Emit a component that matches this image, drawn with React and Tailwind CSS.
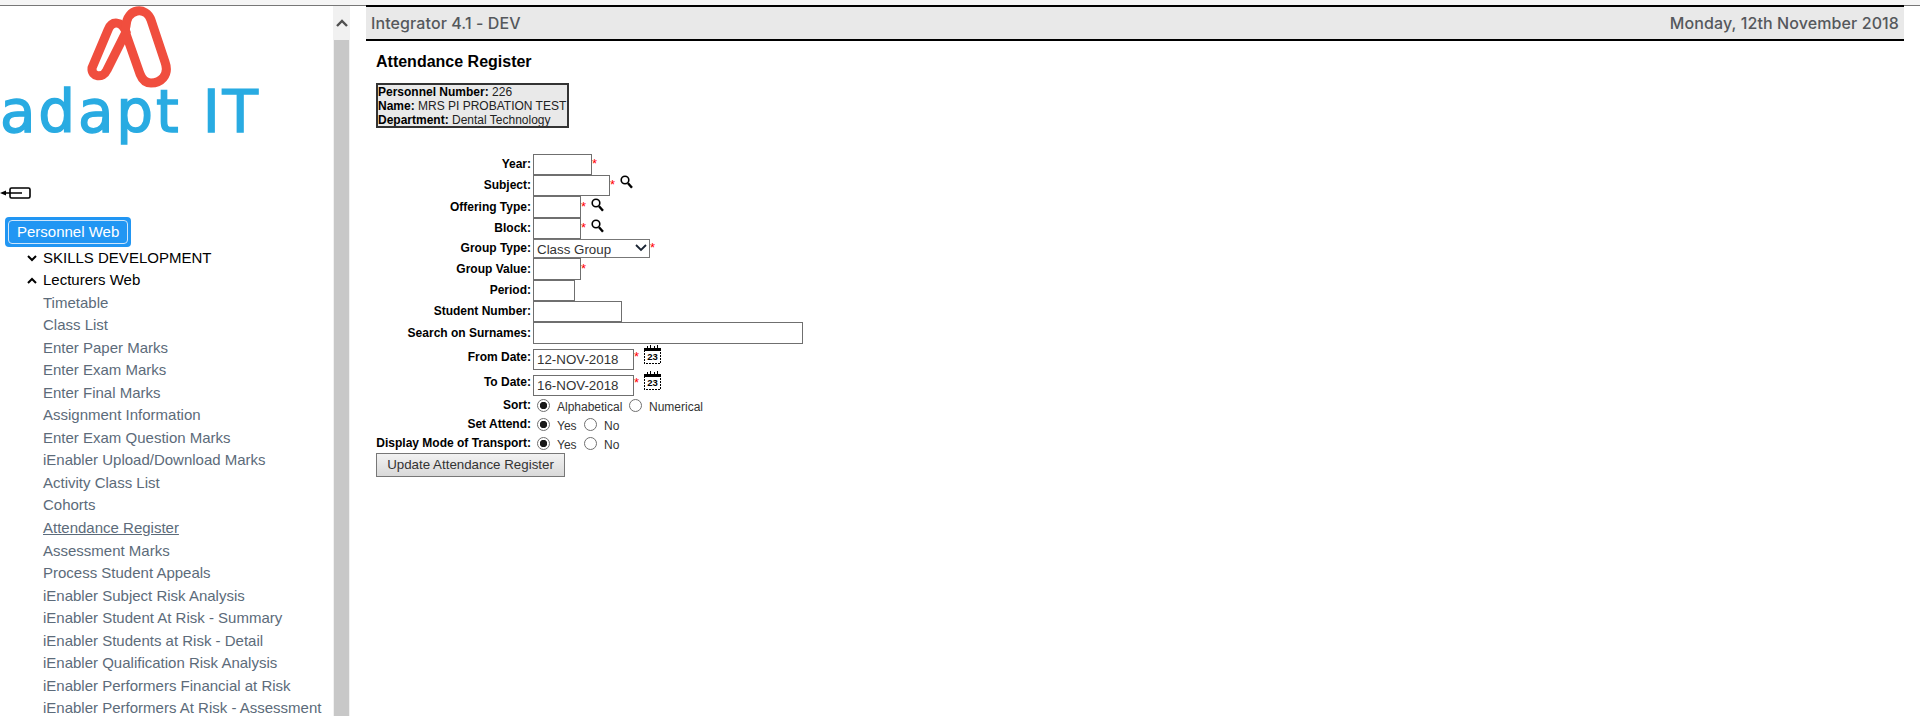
const menu = ["Timetable","Class List","Enter Paper Marks","Enter Exam Marks","Enter Final Marks","Assignment Information","Enter Exam Question Marks","iEnabler Upload/Download Marks","Activity Class List","Cohorts","Attendance Register","Assessment Marks","Process Student Appeals","iEnabler Subject Risk Analysis","iEnabler Student At Risk - Summary","iEnabler Students at Risk - Detail","iEnabler Qualification Risk Analysis","iEnabler Performers Financial at Risk","iEnabler Performers At Risk - Assessment"];

function Chevron({ up }) {
  return (
    <svg width="10" height="7" viewBox="0 0 10 7" className="shrink-0">
      <path d={up ? "M1 6 L5 2 L9 6" : "M1 1 L5 5 L9 1"} fill="none" stroke="#000" strokeWidth="2" />
    </svg>
  );
}

function Logo() {
  return (
    <div className="h-[180px]">
      <svg width="266" height="84" viewBox="0 6 266 84" className="block">
        <g fill="none" stroke="#f04e3e" strokeWidth="9">
          <path d="M126 32 L107 70 C103 79 91 77 92 68 L108 30 C112 20 122 21 126 32 Z" />
          <path d="M126 26 C127 8 146 6 151 20 L165 62 C170 76 160 83 151 83 C145 83 142 79 140 74 L126 34 C125 31 125 29 126 26 Z" />
        </g>
      </svg>
      <div className="h-[62px] text-[58px] leading-[62px] text-[#29abe2] font-['DejaVu_Sans',sans-serif] font-normal tracking-[2.8px] [-webkit-text-stroke:1.4px_#29abe2] whitespace-nowrap -mt-[9px]">adapt IT</div>
    </div>
  );
}

function Sidebar() {
  return (
    <div className="w-[333px] shrink-0 overflow-hidden font-['Liberation_Sans',Arial,sans-serif] text-[15px]">
      <Logo />
      <svg width="32" height="14" viewBox="0 0 32 14" className="block">
        <path d="M0 7 L6 4.5 V9.5 Z" fill="#000" />
        <path d="M5 7 H22" stroke="#000" strokeWidth="1.5" />
        <rect x="10" y="2" width="20" height="10" rx="1.5" fill="none" stroke="#000" strokeWidth="1.6" />
      </svg>
      <div className="ml-[5px] mt-[17px] w-[126px] h-[30px] rounded-[4px] bg-[#2196f3] p-[3px]">
        <div className="h-full border border-[#cfe6fb] rounded-[4px] pl-[8px] leading-[22px] text-white">Personnel Web</div>
      </div>
      <div className="ml-[27px] flex items-center gap-[6px] h-[22.5px] text-black"><Chevron /><span>SKILLS DEVELOPMENT</span></div>
      <div className="ml-[27px] flex items-center gap-[6px] h-[22px] text-black"><Chevron up /><span>Lecturers Web</span></div>
      <ul className="ml-[43px]">
        {menu.map((m) => (
          <li key={m} className={"h-[22.55px] leading-[22.5px] whitespace-nowrap text-[#5c6b7a]" + (m === "Attendance Register" ? " underline" : "")}>{m}</li>
        ))}
      </ul>
    </div>
  );
}

function Scrollbar() {
  return (
    <div className="w-[17px] shrink-0 bg-[#f1f1f1] flex flex-col">
      <div className="h-[34px] flex items-center justify-center">
        <svg width="12" height="8" viewBox="0 0 12 8"><path d="M1 7 L6 2 L11 7" fill="none" stroke="#505050" strokeWidth="2.4" /></svg>
      </div>
      <div className="flex-1 bg-[#c8c8c8] mx-[1px]" />
    </div>
  );
}

const Star = () => <span className="text-[#ff0000] text-[13px] leading-none -mt-[2px]">*</span>;

function Lens() {
  return (
    <svg width="13" height="14" viewBox="0 0 13 14" className="block">
      <circle cx="5" cy="5" r="3.8" fill="none" stroke="#000" strokeWidth="1.6" />
      <path d="M8 8.2 L12 12.8" stroke="#000" strokeWidth="2.4" />
    </svg>
  );
}

function Calendar() {
  return (
    <svg width="19" height="19" viewBox="0 0 19 19" className="block">
      <rect x="1.5" y="4.5" width="16" height="13.5" fill="#fff" stroke="#000" strokeDasharray="2 1" shapeRendering="crispEdges" />
      <rect x="1" y="3" width="17" height="3" fill="#000" shapeRendering="crispEdges" />
      <path d="M4 1h1v4H4zM7 0h1v5H7zM11 1h1v4h-1zM14 0h1v5h-1z" fill="#000" shapeRendering="crispEdges" />
      <text x="9.5" y="15" textAnchor="middle" fontSize="9.5" fontWeight="700" fontFamily="Liberation Sans" fill="#000">23</text>
    </svg>
  );
}

const inputCls = "block h-full border border-[#6f6f6f] bg-white px-[3px] text-[13.33px] text-[#333] outline-none";

function Row({ label, className, labelClass = "items-center pb-[1px]", children }) {
  return (
    <div className={"flex " + className}>
      <label className={"w-[155px] shrink-0 flex justify-end font-bold text-black whitespace-nowrap " + labelClass}>{label}:</label>
      <div className="ml-[2px] flex items-center">{children}</div>
    </div>
  );
}

function Radio({ checked, name }) {
  return (
    <input
      type="radio"
      name={name}
      defaultChecked={checked}
      className="appearance-none w-[13px] h-[13px] rounded-full border border-[#707070] bg-white checked:bg-[radial-gradient(circle,#1a1a1a_3.4px,#ffffff_4px)] shrink-0"
    />
  );
}

function Form() {
  return (
    <div className="text-[12px]">
      <Row label="Year" className="h-[21px]"><input className={inputCls + " w-[59px]"} /><Star /></Row>
      <Row label="Subject" className="h-[21px]"><input className={inputCls + " w-[77px]"} /><Star /><span className="ml-[5px] -mt-[8px]"><Lens /></span></Row>
      <Row label="Offering Type" className="h-[22px]"><input className={inputCls + " w-[48px]"} /><Star /><span className="ml-[5px] -mt-[5px]"><Lens /></span></Row>
      <Row label="Block" className="h-[21px]"><input className={inputCls + " w-[48px]"} /><Star /><span className="ml-[5px] -mt-[5px]"><Lens /></span></Row>
      <Row label="Group Type" className="h-[19px]">
        <div className="relative h-full w-[117px]">
          <select className="appearance-none block w-full h-full border border-[#777] bg-white pl-[3px] text-[13.33px] text-[#333] outline-none">
            <option>Class Group</option>
          </select>
          <svg width="12" height="8" viewBox="0 0 12 8" className="absolute right-[3px] top-[5px]"><path d="M1 1 L6 6 L11 1" fill="none" stroke="#1a2433" strokeWidth="1.8" /></svg>
        </div>
        <Star />
      </Row>
      <Row label="Group Value" className="h-[22px]"><input className={inputCls + " w-[48px]"} /><Star /></Row>
      <Row label="Period" className="h-[21px]"><input className={inputCls + " w-[42px]"} /></Row>
      <Row label="Student Number" className="h-[21px]"><input className={inputCls + " w-[89px]"} /></Row>
      <Row label="Search on Surnames" className="h-[22px]"><input className={inputCls + " w-[270px]"} /></Row>
      <Row label="From Date" className="h-[26px]" labelClass="items-start pt-[4px]">
        <div className="flex h-[26px] items-center">
          <input defaultValue="12-NOV-2018" className={inputCls + " w-[101px] !h-[21px] mt-[4px]"} /><Star /><span className="ml-[4px] -mt-[5px]"><Calendar /></span>
        </div>
      </Row>
      <Row label="To Date" className="h-[26px]" labelClass="items-start pt-[3px]">
        <div className="flex h-[26px] items-center">
          <input defaultValue="16-NOV-2018" className={inputCls + " w-[101px] !h-[21px] mt-[4px]"} /><Star /><span className="ml-[4px] -mt-[5px]"><Calendar /></span>
        </div>
      </Row>
      <Row label="Sort" className="h-[19px]">
        <span className="ml-[4px] flex items-center"><Radio checked name="s" /><span className="ml-[7px] mt-[2px] text-[12px] text-[#333] w-[72px]">Alphabetical</span><Radio name="s" /><span className="ml-[7px] mt-[2px] text-[12px] text-[#333]">Numerical</span></span>
      </Row>
      <Row label="Set Attend" className="h-[19px]">
        <span className="ml-[4px] flex items-center"><Radio checked name="a" /><span className="ml-[7px] mt-[2px] text-[12px] text-[#333] w-[27px]">Yes</span><Radio name="a" /><span className="ml-[7px] mt-[2px] text-[12px] text-[#333]">No</span></span>
      </Row>
      <Row label="Display Mode of Transport" className="h-[19px]">
        <span className="ml-[4px] flex items-center"><Radio checked name="t" /><span className="ml-[7px] mt-[2px] text-[12px] text-[#333] w-[27px]">Yes</span><Radio name="t" /><span className="ml-[7px] mt-[2px] text-[12px] text-[#333]">No</span></span>
      </Row>
      <button className="block w-[189px] h-[24px] border border-[#777] bg-gradient-to-b from-[#f2f2f2] to-[#d9d9d9] text-[13.33px] text-[#333]">Update Attendance Register</button>
    </div>
  );
}

function Main() {
  return (
    <div className="ml-[16px] w-[1538px] shrink-0 font-['Liberation_Sans',Arial,sans-serif]">
      <div className="-mt-[1px] h-[36px] border-t-2 border-b-2 border-black bg-[#e9e9e9] flex items-center justify-between pl-[5px] pr-[5px] font-['Inter',sans-serif] text-[16px] tracking-[0.1px] text-[#55585c] font-medium">
        <span>Integrator 4.1 - DEV</span>
        <span>Monday, 12th November 2018</span>
      </div>
      <div className="pl-[10px]">
        <h1 className="mt-[11px] h-[20px] leading-[20px] text-[16px] font-bold text-black">Attendance Register</h1>
        <div className="mt-[11px] w-[193px] h-[45px] border-[2px] border-[#333] bg-[#e9e9e9] text-[12px] leading-[14px] text-[#222] whitespace-nowrap overflow-hidden">
          <div><b className="text-black">Personnel Number:</b> 226</div>
          <div><b className="text-black">Name:</b> MRS PI PROBATION TEST</div>
          <div><b className="text-black">Department:</b> Dental Technology</div>
        </div>
        <div className="mt-[26px]"><Form /></div>
      </div>
    </div>
  );
}

export default function App() {
  return (
    <div className="w-[1920px] h-[716px] overflow-hidden bg-white flex flex-col">
      <div className="h-[6px] shrink-0 bg-[#f5f5f5] border-b border-[#777]" />
      <div className="flex flex-1 min-h-0">
        <Sidebar />
        <Scrollbar />
        <Main />
      </div>
    </div>
  );
}
